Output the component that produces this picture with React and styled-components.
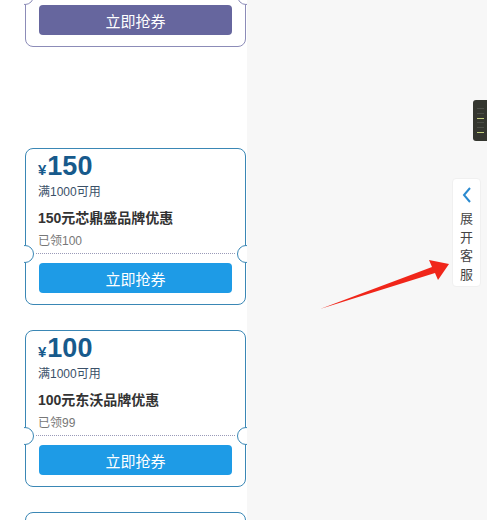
import React from 'react'
import styled, { createGlobalStyle } from 'styled-components'

const Global = createGlobalStyle`
  html, body {
    margin: 0;
    padding: 0;
    height: 520px;
    overflow: hidden;
    font-family: "Liberation Sans", "Noto Sans CJK SC", sans-serif;
  }
`

const Page = styled.div`
  display: flex;
  height: 520px;
  position: relative;
  overflow: hidden;
`

const CouponColumn = styled.div`
  width: 247px;
  flex-shrink: 0;
  background: #fff;
  padding-left: 25px;
  box-sizing: border-box;
`

const CouponList = styled.div`
  display: flex;
  flex-direction: column;
  gap: 25px;
  margin-top: ${p => p.$offset}px;
`

const Side = styled.div`
  flex: 1;
  background: #f7f7f7;
  position: relative;
`

const Card = styled.div`
  position: relative;
  width: 221px;
  height: 157px;
  box-sizing: border-box;
  border: 1px solid ${p => p.$border};
  border-radius: 8px;
  display: flex;
  flex-direction: column;
  padding-top: 2px;
`

// half-circle cut on each side of the coupon, at the dotted line
const Notch = styled.span`
  position: absolute;
  top: 96px;
  ${p => (p.$right ? 'right: -10px;' : 'left: -10px;')}
  width: 16px;
  height: 16px;
  border-radius: 50%;
  border: 1px solid ${p => p.$border};
  background: #fff;
  clip-path: ${p => (p.$right ? 'inset(0 calc(50% - 1px) 0 0)' : 'inset(0 0 0 calc(50% - 1px))')};
`

const Info = styled.div`
  padding: 0 12px;
  display: flex;
  flex-direction: column;
`

const Amount = styled.div`
  height: 30px;
  line-height: 30px;
  color: #175a8c;
  font-weight: bold;
  font-size: 27px;
  span {
    font-size: 15px;
    margin-right: 1px;
  }
`

const Limit = styled.div`
  margin-top: 2px;
  line-height: 18px;
  font-size: 12px;
  color: #3a5068;
`

const Title = styled.div`
  margin-top: 7px;
  line-height: 20px;
  font-size: 14px;
  font-weight: bold;
  color: #333;
`

const Taken = styled.div`
  margin-top: 4px;
  line-height: 18px;
  font-size: 12px;
  color: #777;
`

const Divider = styled.div`
  margin: 3px 10px 0;
  border-top: 1px dotted #9a9ab8;
`

const GrabButton = styled.button`
  margin: 9px 13px 0;
  height: 30px;
  border: none;
  border-radius: 4px;
  background: ${p => p.$bg};
  color: #fff;
  font-family: "Noto Sans CJK SC", sans-serif;
  font-size: 15px;
  cursor: pointer;
`

const Handle = styled.div`
  position: absolute;
  right: 0;
  top: 100px;
  width: 14px;
  height: 41px;
  background: #34362f;
  border-radius: 3px 0 0 3px;
  display: flex;
  flex-direction: column;
  justify-content: space-evenly;
  align-items: center;
  padding: 4px 0;
  box-sizing: border-box;
`

const HandleLine = styled.i`
  display: block;
  width: 7px;
  height: 1px;
  background: ${p => (p.$lit ? '#c4d07e' : '#4c4f47')};
`

const ServiceTab = styled.div`
  position: absolute;
  left: 205px;
  top: 178px;
  width: 29px;
  height: 109px;
  background: #fff;
  border: 1px solid #f0f0f0;
  border-radius: 4px;
  box-sizing: border-box;
  display: flex;
  flex-direction: column;
  align-items: center;
  padding-top: 7px;
  cursor: pointer;
`

const ServiceText = styled.div`
  margin-top: 5px;
  font-family: "Noto Sans CJK SC", sans-serif;
  font-size: 13px;
  line-height: 18.5px;
  color: #444;
  width: 13px;
  text-align: center;
`

const Arrow = styled.svg`
  position: absolute;
  left: 0;
  top: 0;
  pointer-events: none;
`

const coupons = [
  { id: 1, amount: 200, limit: '满1000可用', title: '200元品牌优惠', taken: '已领120', border: '#8c8cb8', btn: '#66669e' },
  { id: 2, amount: 150, limit: '满1000可用', title: '150元芯鼎盛品牌优惠', taken: '已领100', border: '#3a87b5', btn: '#1e9be6' },
  { id: 3, amount: 100, limit: '满1000可用', title: '100元东沃品牌优惠', taken: '已领99', border: '#3a87b5', btn: '#1e9be6' },
  { id: 4, amount: 50, limit: '满500可用', title: '50元品牌优惠', taken: '已领80', border: '#3a87b5', btn: '#1e9be6' }
]

function Coupon({ data }) {
  return (
    <Card $border={data.border}>
      <Info>
        <Amount><span>¥</span>{data.amount}</Amount>
        <Limit>{data.limit}</Limit>
        <Title>{data.title}</Title>
        <Taken>{data.taken}</Taken>
      </Info>
      <Divider />
      <GrabButton $bg={data.btn}>立即抢券</GrabButton>
      <Notch $border={data.border} />
      <Notch $border={data.border} $right />
    </Card>
  )
}

export default function App() {
  return (
    <Page>
      <Global />
      <CouponColumn>
        <CouponList $offset={-110}>
          <Coupon data={coupons[0]} />
          <div style={{ height: 76 }} />
        </CouponList>
        <CouponList $offset={0}>
          {coupons.slice(1).map(c => <Coupon key={c.id} data={c} />)}
        </CouponList>
      </CouponColumn>
      <Side>
        <Handle>
          <HandleLine />
          <HandleLine />
          <HandleLine $lit />
          <HandleLine />
          <HandleLine />
          <HandleLine $lit />
        </Handle>
        <ServiceTab>
          <svg width="12" height="18" viewBox="0 0 12 18">
            <path d="M9 2 L3 9 L9 16" fill="none" stroke="#2a8ad0" strokeWidth="2" />
          </svg>
          <ServiceText>展开客服</ServiceText>
        </ServiceTab>
      </Side>
      <Arrow width="487" height="520" viewBox="0 0 487 520">
        <polygon
          points="320,309 432,267 429,260 449,264 438,280 435,273"
          fill="#f0261a"
        />
      </Arrow>
    </Page>
  )
}
